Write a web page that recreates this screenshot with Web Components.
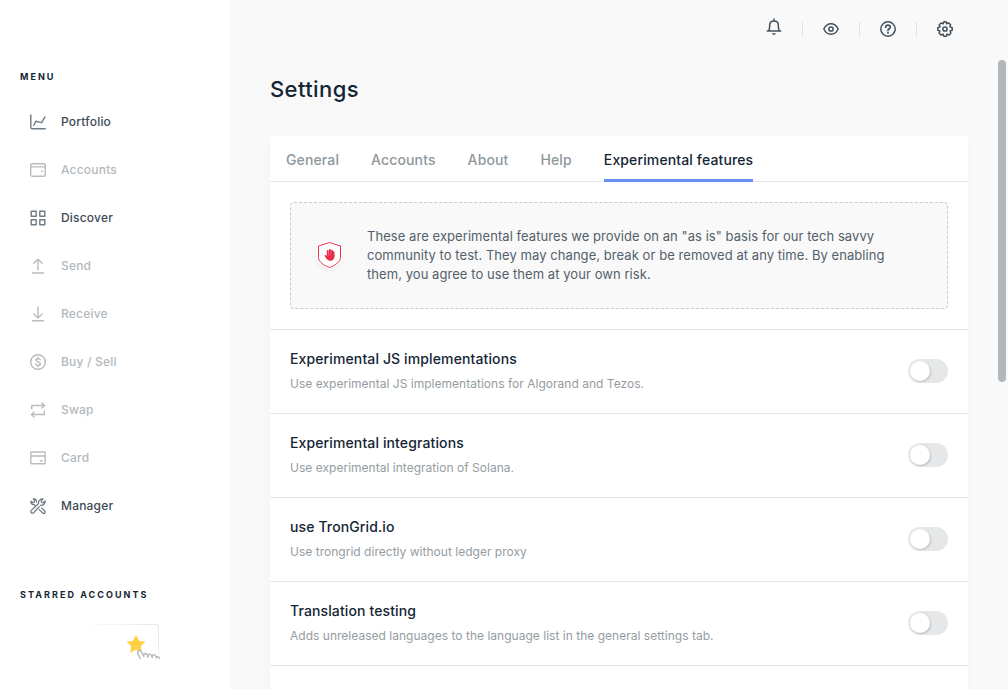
<!DOCTYPE html>
<html lang="en">
<head>
<meta charset="utf-8">
<title>Settings</title>
<style>
html,body{margin:0;height:100%;overflow:hidden;background:#f9f9f9}
body{font-family:Inter,"Liberation Sans",sans-serif;color:#142533}
</style>
</head>
<body>
<app-shell>
  <side-bar slot="side"></side-bar>
  <top-bar slot="top"></top-bar>
  <settings-page></settings-page>
</app-shell>
<script>
const ICONS = {
  chart: '<path d="M.8 1v12.6q0 1.100 1.100 1.100H15.200"/><path d="M3.800 11.200 5.800 7.200 11.600 8.600 15 2.900"/>',
  wallet: '<rect x=".7" y="1.700" width="14.600" height="12.600" rx="1.800"/><path d="M.7 4.900H13.600q1.700 0 1.700 1.700"/><path d="M11.600 9.400h1.200"/>',
  grid: '<rect x="1.200" y="1.200" width="5" height="5"/><rect x="9.800" y="1.200" width="5" height="5"/><rect x="1.200" y="9.800" width="5" height="5"/><rect x="9.800" y="9.800" width="5" height="5"/>',
  send: '<path d="M8 11.800V1.400M3.800 5.200 8 1.200 12.200 5.200M2.600 15H13.400"/>',
  receive: '<path d="M8 1V11.800M3.800 8 8 12 12.200 8M2.600 14.800H13.400"/>',
  dollar: '<circle cx="8" cy="8" r="7.300"/><path d="M10.300 5.900C9.900 4.300 5.800 4.200 5.800 6.100 5.800 8.200 10.400 7.400 10.400 9.700 10.400 11.900 6 11.700 5.600 9.900M8 3.300V4.600M8 11.300V12.700"/>',
  swap: '<path d="M1.700 6.800V3.500H14.500M11.900.9 14.600 3.500 11.900 6.100M14.300 9V12.500H1.500M4.100 9.900 1.400 12.500 4.100 15.100"/>',
  card: '<rect x=".8" y="2" width="14.400" height="11.700" rx=".6"/><path d="M1 6H15M10.200 10.700h2"/>',
  tools: '<path d="M9.200 8.700 3.600 14.700a1.600 1.600 0 0 1-2.300-2.300L8.600 5.500C8.200 2.800 10.200.7 13 .9L11.200 2.900 11.500 4.500 13.100 4.800 15.100 2.900C15.500 5.700 13.200 7.700 10.400 7.300"/><path d="M1 3.200C.6 5.200 2 6.900 4.200 6.700L5 7.500M3.300.9C5.200.6 6.800 1.900 6.700 4M1 3.200 2.800 4.700 4.400 4.200 4.700 2.600 3.300.9M11.500 9.900 14.700 13a1.400 1.400 0 0 1-2 2L9.300 11.600"/>',
  bell: '<path d="M1.300 12.100H14.700M2.900 12C3.500 10.300 3.700 8.500 3.700 6.100 3.700 3.500 5.500 1.900 8 1.900s4.300 1.600 4.300 4.200c0 2.400.2 4.200.8 5.900M8 .1v1.500"/><path d="M6.500 14.500h3L8.800 15.600H7.200Z" fill="currentColor" stroke-width=".5"/>',
  eye: '<path d="M.8 8C2.500 4.400 5 2.700 8 2.700S13.500 4.400 15.200 8C13.500 11.600 11 13.300 8 13.300S2.500 11.600.8 8Z"/><circle cx="8" cy="8" r="2.100"/>',
  help: '<circle cx="8" cy="8" r="7.200"/><path stroke-width="1.700" d="M5.700 6.200C5.800 3.500 10.400 3.600 10.300 6.200 10.300 7.800 8 7.700 8 9.200M8 11.400v.6"/>',
  gear: '<path d="M6.900.8H9.100L9.600 2.800 11.500 1.900 13.600 3.700 12.900 5.800 15.200 6.700V9.300L13.100 10 13.900 12.200 12.100 14 10 13.100 9.300 15.200H6.800L6 13.100 3.900 14 2.100 12.200 2.900 10 .8 9.300V6.700L3 5.900 2.200 3.800 4.100 2 6.200 2.800Z"/><circle cx="8" cy="8" r="2.100"/>'
};
function define(name, render){
  customElements.define(name, class extends HTMLElement{
    connectedCallback(){
      if(this.shadowRoot) return;
      const t = document.createElement('template');
      t.innerHTML = render(this);
      this.attachShadow({mode:'open'}).append(t.content.cloneNode(true));
    }
  });
}
define('line-icon', el => `<style>:host{display:block;width:16px;height:16px;flex:none}svg{display:block;overflow:visible}</style>
<svg width="16" height="16" viewBox="0 0 16 16" fill="none" stroke="currentColor" stroke-width="${el.getAttribute('weight')||1.5}" stroke-linecap="round" stroke-linejoin="round">${ICONS[el.getAttribute('name')]}</svg>`);

define('app-shell', () => `<style>
:host{display:grid;grid-template-columns:230px 1fr;height:100vh;overflow:hidden}
main{position:relative;display:flex;flex-direction:column;min-width:0;height:100vh;overflow:hidden}
.thumb{position:absolute;right:2px;top:60px;width:8px;height:322px;border-radius:4px;background:#b2b7bb}
</style><slot name="side"></slot><main><slot name="top"></slot><slot></slot><div class="thumb"></div></main>`);

define('nav-item', el => `<style>
:host{display:flex;align-items:center;height:48px;padding-left:10px;gap:15px;font-size:12px;font-weight:500;line-height:16px;letter-spacing:.2px;color:#3c4a56}
line-icon{color:#6f7a84}
:host([disabled]){color:#b3b8bd}
:host([disabled]) line-icon{color:#b7bcc0}
</style><line-icon name="${el.getAttribute('icon')}" weight="${el.getAttribute('weight')||1.4}"></line-icon><span><slot></slot></span>`);

define('starred-hint', () => `<style>:host{display:block;width:90px;height:37px}svg{display:block}</style>
<svg width="90" height="37" viewBox="0 0 90 37" fill="none">
<defs><linearGradient id="f" x1="0" x2="1"><stop stop-color="#e8e8e8" stop-opacity="0"/><stop offset="1" stop-color="#e8e8e8"/></linearGradient>
<linearGradient id="v" x1="0" y1="0" x2="0" y2="1"><stop offset=".5" stop-color="#e8e8e8"/><stop offset="1" stop-color="#e8e8e8" stop-opacity=".5"/></linearGradient></defs>
<rect x="8" y="2" width="76" height="1" fill="url(#f)"/><path d="M84 2.500q2.500 0 2.500 2.500" stroke="#e8e8e8"/><rect x="86" y="5" width="1" height="27" fill="url(#v)"/>
<path d="M64 13.800 66.700 19.200 72.600 20 68.300 24.200 69.300 30.100 64 27.300 58.700 30.100 59.700 24.200 55.400 20 61.300 19.200Z" fill="#ffd147" stroke="#ffd147" stroke-width="1" stroke-linejoin="round"/>
<path d="M68.300 38C68.200 35.500 66.200 33.300 65.700 30.800 65.500 28.400 68.500 27.700 69.500 29.700L71.800 34.500V33C72.200 31.200 74.500 31.100 75.100 32.600L76 35.300 76 33.400C76.500 31.800 78.500 31.700 79.200 33.200L80.200 35.600 80.200 33.700C80.900 32.200 82.800 32.300 83.500 33.700L84.500 35.900C85 33.700 87 34.300 88 38" fill="#fff" stroke="#b7b7b7" stroke-width="1.400" stroke-linejoin="round"/>
</svg>`);

define('side-bar', () => `<style>
:host{display:flex;flex-direction:column;background:#fff;padding:71px 20px 0;height:618px}
h2{margin:0;font-size:9px;line-height:12px;font-weight:700;letter-spacing:2.050px;white-space:nowrap}
nav{margin-top:15px;margin-bottom:59px}
starred-hint{margin:21px 0 0 52px}
</style><h2>MENU</h2><nav>
<nav-item icon="chart">Portfolio</nav-item>
<nav-item icon="wallet" disabled>Accounts</nav-item>
<nav-item icon="grid">Discover</nav-item>
<nav-item icon="send" disabled>Send</nav-item>
<nav-item icon="receive" disabled>Receive</nav-item>
<nav-item icon="dollar" disabled>Buy / Sell</nav-item>
<nav-item icon="swap" disabled>Swap</nav-item>
<nav-item icon="card" disabled>Card</nav-item>
<nav-item icon="tools" weight="1.250">Manager</nav-item>
</nav><h2>STARRED ACCOUNTS</h2><starred-hint></starred-hint>`);

define('top-bar', () => `<style>
:host{display:flex;align-items:center;justify-content:flex-end;gap:20px;height:58px;padding-right:55px;color:#43515c;flex:none}
i{width:1px;height:15px;background:#dfe1e3;margin-top:1px}
.bell{margin-top:-4px}
</style><line-icon class="bell" name="bell"></line-icon><i></i><line-icon name="eye"></line-icon><i></i><line-icon name="help"></line-icon><i></i><line-icon name="gear"></line-icon>`);

define('tab-item', () => `<style>
:host{display:flex;align-items:center;box-sizing:border-box;height:46px;padding-top:5px;border-bottom:3px solid transparent;font-size:14px;font-weight:500;line-height:18px;letter-spacing:.130px;color:#8f979d;white-space:nowrap}
:host([active]){color:#142533;border-color:#6490f1}
</style><slot></slot>`);

define('warning-banner', () => `<style>
:host{display:flex;align-items:center;box-sizing:border-box;height:107px;border:1px dashed #c9ccce;border-radius:4px;background:#f9f9f9;padding-left:22.500px;gap:22.500px}
p{margin:0;width:530px;font-size:13px;line-height:19px;letter-spacing:.060px;color:#535f6a}
svg{flex:none;overflow:visible;margin-bottom:2px;filter:drop-shadow(0 2px 2px rgba(0,0,0,.05))}
</style><svg width="31" height="34" viewBox="0 0 31 34"><path d="M15.500 4.500 26.500 8V19.500C26.500 24 21 27.500 15.500 29.500 10 27.500 4.500 24 4.500 19.500V8Z" fill="#fff" stroke="#fff" stroke-width="4" stroke-linejoin="round"/><path d="M15.500 4.500 26.500 8V19.500C26.500 24 21 27.500 15.500 29.500 10 27.500 4.500 24 4.500 19.500V8Z" fill="#fff" stroke="#ea2e49" stroke-width="1"/>
<path d="M13.700 18V13M15.900 17V12M18 18V12.800M19.500 18V14.200" stroke="#ea2e49" stroke-width="1.900" stroke-linecap="round"/><path d="M13 17.300H20.400V18.600C20.400 21.200 19 22.800 16.500 22.800 13.500 22.800 12.200 20.400 10.800 18.300 10.300 17.300 11.300 16.500 12.100 17.200L13 18.300Z" fill="#ea2e49"/></svg><p><slot></slot></p>`);

define('toggle-switch', () => `<style>
:host{display:flex;align-items:center;box-sizing:border-box;width:40px;height:24px;border-radius:12px;background:#e6e7e9;padding-left:2px;flex:none}
span{width:20px;height:20px;border-radius:50%;background:#fff;box-shadow:1px 1px 2px rgba(0,0,0,.18)}
</style><span></span>`);

define('feature-row', el => `<style>
:host{display:flex;align-items:center;justify-content:space-between;box-sizing:border-box;height:84px;border-top:1px solid #e5e6e8;padding:0 20px 1px}
h3{margin:0 0 7px;font-size:14px;font-weight:500;line-height:18px;letter-spacing:.120px}
p{margin:0;font-size:12px;line-height:18px;letter-spacing:.020px;color:#959ca2}
</style><div><h3>${el.getAttribute('heading')}</h3><p><slot></slot></p></div><toggle-switch></toggle-switch>`);

define('settings-page', () => `<style>
:host{display:flex;flex-direction:column;padding:15px 40px 0}
h1{margin:0 0 31px;font-size:22px;line-height:32px;font-weight:500;letter-spacing:.4px}
.card{background:#fff;border-radius:4px;box-shadow:0 4px 8px rgba(0,0,0,.03)}
.tabs{display:flex;gap:32px;height:45px;padding:0 16px;border-bottom:1px solid #e5e6e8}
.notice{padding:20px 20px 20px}
</style><h1>Settings</h1><div class="card"><div class="tabs">
<tab-item>General</tab-item><tab-item>Accounts</tab-item><tab-item>About</tab-item><tab-item>Help</tab-item><tab-item active>Experimental features</tab-item></div>
<div class="notice"><warning-banner>These are experimental features we provide on an "as is" basis for our tech savvy community to test. They may change, break or be removed at any time. By enabling them, you agree to use them at your own risk.</warning-banner></div>
<feature-row heading="Experimental JS implementations">Use experimental JS implementations for Algorand and Tezos.</feature-row>
<feature-row heading="Experimental integrations">Use experimental integration of Solana.</feature-row>
<feature-row heading="use TronGrid.io">Use trongrid directly without ledger proxy</feature-row>
<feature-row heading="Translation testing">Adds unreleased languages to the language list in the general settings tab.</feature-row>
<feature-row heading=""></feature-row></div>`);
</script>
</body>
</html>
